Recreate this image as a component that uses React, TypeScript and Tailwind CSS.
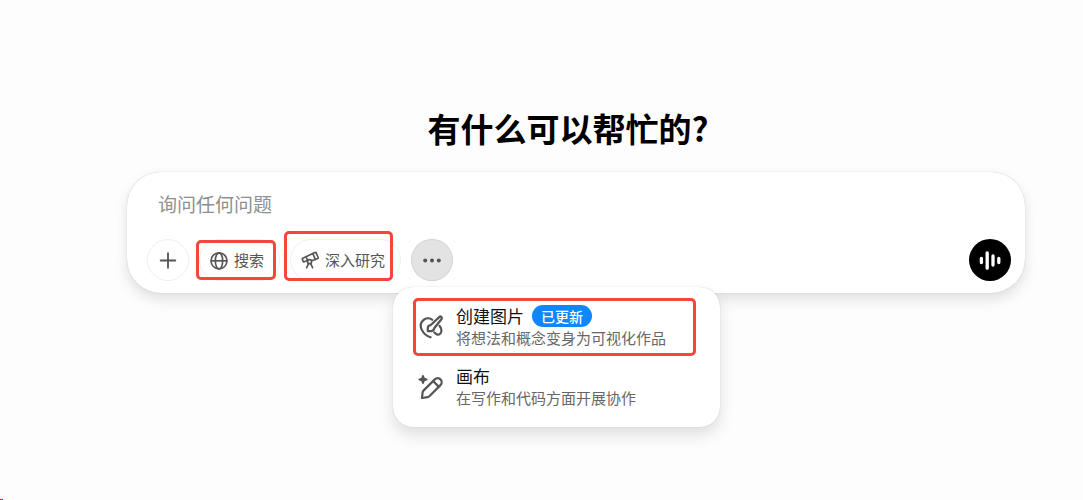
import type { ReactNode } from 'react'

type MenuEntry = {
  id: string
  title: string
  desc: string
  badge?: string
  marked?: boolean
  icon: ReactNode
}

function PlusIcon() {
  return (
    <svg width="22" height="22" viewBox="0 0 24 24" fill="none" stroke="currentColor" strokeWidth="2" strokeLinecap="round" aria-hidden="true">
      <path d="M12 4.5v16M4 12.5h16" />
    </svg>
  )
}

function GlobeIcon() {
  return (
    <svg width="20" height="20" viewBox="0 0 24 24" fill="none" stroke="currentColor" strokeWidth="2" aria-hidden="true">
      <circle cx="12" cy="13" r="9.6" />
      <ellipse cx="12" cy="13" rx="4.4" ry="9.6" />
      <path d="M2.4 13h19.2" />
    </svg>
  )
}

function TelescopeIcon() {
  return (
    <svg width="20" height="20" viewBox="0 0 24 24" fill="none" stroke="currentColor" strokeWidth="2" strokeLinecap="round" strokeLinejoin="round" aria-hidden="true">
      <path d="M15.4 4.2l2.7-1.2a1 1 0 0 1 1.3.5l2.4 5.5a1 1 0 0 1-.5 1.3l-2.9 1.2z" />
      <path d="M15.4 4.3L7.2 8l1.9 4.6" />
      <path d="M18.2 11.4l-4.3 1.5" />
      <path d="M7.2 8l-3.9 1.9a1 1 0 0 0-.5 1.3l1 2.4a1 1 0 0 0 1.3.5l4-1.5" />
      <circle cx="11.5" cy="14" r="2.4" />
      <path d="M10.2 16.3L8 21.3M12.9 16.3l2.2 5" />
    </svg>
  )
}

function DotsIcon() {
  return (
    <svg width="24" height="24" viewBox="0 0 24 24" fill="currentColor" aria-hidden="true">
      <circle cx="5.2" cy="12.5" r="2" />
      <circle cx="12" cy="12.5" r="2" />
      <circle cx="18.8" cy="12.5" r="2" />
    </svg>
  )
}

function VoiceIcon() {
  return (
    <svg width="24" height="24" viewBox="0 0 24 24" fill="none" stroke="currentColor" strokeWidth="3.3" strokeLinecap="round" aria-hidden="true">
      <path d="M3.4 10.5v4M9.2 4.8v15.4M15 8v9M20.8 10.5v4" />
    </svg>
  )
}

function PaletteBrushIcon() {
  return (
    <svg width="26" height="26" viewBox="0 0 26 26" fill="none" stroke="currentColor" strokeWidth="2.2" strokeLinecap="round" strokeLinejoin="round" aria-hidden="true">
      <path d="M14.2 5.8C12.2 4 8.800 3.600 6.300 5.400 3 7.800 1.800 11.600 3.700 15.600c1.700 3.500 4.900 6.500 8.900 7.700" />
      <path d="M21.500 11.800c1.300 1.600 2.100 3.400 1.900 5.200-.2 2.200-1.900 3.900-3.900 3.700-1.500-.2-2.200-1.200-3.200-2.300" />
      <path d="M12.500 11.200L21.200 3.100a1.500 1.500 0 0 1 2.200 2.100l-7.200 9.100c-.3 1.800-1.500 2.900-3.300 2.900H9.800v-3c0-1.700 1-2.800 2.700-3z" />
    </svg>
  )
}

function SparklePencilIcon() {
  return (
    <svg width="26" height="26" viewBox="0 0 26 26" fill="none" stroke="currentColor" strokeWidth="2.2" strokeLinecap="round" strokeLinejoin="round" aria-hidden="true">
      <path d="M5 1.600l1.200 2.700 2.700 1.200-2.700 1.200L5 9.400 3.800 6.700 1.100 5.500l2.700-1.200z" fill="currentColor" strokeWidth="1.400" />
      <path d="M4 24l.6-5.600a3 3 0 0 1 .9-1.800L16.800 5.400a4 4 0 0 1 5.700 5.700L11.300 22.300a3 3 0 0 1-1.800.9z" />
      <path d="M15.300 7.200l5.400 5.400" />
    </svg>
  )
}

const MENU: MenuEntry[] = [
  {
    id: 'image',
    title: '创建图片',
    desc: '将想法和概念变身为可视化作品',
    badge: '已更新',
    marked: true,
    icon: <PaletteBrushIcon />,
  },
  {
    id: 'canvas',
    title: '画布',
    desc: '在写作和代码方面开展协作',
    icon: <SparklePencilIcon />,
  },
]

function ToolMenu() {
  return (
    <div
      role="menu"
      className="absolute top-12 -left-[18px] z-10 w-[327px] rounded-[20px] bg-white py-2.5 shadow-[0_0_1px_rgba(0,0,0,0.25),0_8px_16px_rgba(0,0,0,0.12)]"
    >
      {MENU.map((m) => (
        <button
          key={m.id}
          type="button"
          role="menuitem"
          className="relative flex w-full items-center gap-3 pt-2 pb-[9px] pr-6 pl-[25px] text-left"
        >
          <span className="shrink-0 text-[#555]">{m.icon}</span>
          <span className="min-w-0 flex-1 whitespace-nowrap">
            <span className="flex h-[22px] items-center gap-2 text-[17px] leading-[22px] text-[#111]">
              {m.title}
              {m.badge && (
                <span className="rounded-full bg-[#1086fa] px-[9px] text-[14px] leading-[22px] font-medium text-white">
                  {m.badge}
                </span>
              )}
            </span>
            <span className="block text-[15px] leading-[21px] text-[#666]">{m.desc}</span>
          </span>
          {m.marked && (
            <span className="pointer-events-none absolute top-px right-6 bottom-px left-5 rounded-[5px] border-3 border-[#f4463a]" />
          )}
        </button>
      ))}
    </div>
  )
}

export default function App() {
  return (
    <main className="relative min-h-screen bg-[#fdfdfd] pt-[106px] pr-[58px] pl-[127px] font-['Noto_Sans_CJK_SC',sans-serif]">
      <h1 className="pr-4 text-center text-[33px] leading-[44px] font-bold text-black">有什么可以帮忙的?</h1>

      <form className="mt-[22px] rounded-[34px] bg-white pt-[18px] pr-3.5 pb-3 pl-5 shadow-[0_0_1px_rgba(0,0,0,0.25),0_6px_14px_rgba(0,0,0,0.12)]">
        <input
          type="text"
          aria-label="询问任何问题"
          placeholder="询问任何问题"
          className="block h-7 w-full bg-transparent pl-[11px] text-[19px] text-[#333] outline-none placeholder:text-[#8f8f8f]"
        />
        <div className="mt-[21px] flex items-center gap-2.5 text-[#555]">
          <button
            type="button"
            aria-label="添加"
            className="flex size-[42px] items-center justify-center rounded-full ring-1 ring-[#f0f0f0] ring-inset"
          >
            <PlusIcon />
          </button>
          <button
            type="button"
            className="relative flex h-[42px] items-center gap-[5px] rounded-full pr-4 pl-2.5 text-[15px] whitespace-nowrap ring-1 ring-[#f0f0f0] ring-inset"
          >
            <GlobeIcon />
            搜索
            <span className="pointer-events-none absolute inset-y-px right-1 -left-[3px] rounded-[5px] border-3 border-[#f4463a]" />
          </button>
          <button
            type="button"
            className="relative flex h-[42px] items-center gap-[5px] rounded-full pr-4 pl-2.5 text-[15px] whitespace-nowrap ring-1 ring-[#f0f0f0] ring-inset"
          >
            <TelescopeIcon />
            深入研究
            <span className="pointer-events-none absolute -top-2 right-2 bottom-0 -left-[6px] rounded-[5px] border-3 border-[#f4463a]" />
          </button>
          <div className="relative">
            <button
              type="button"
              aria-label="更多"
              aria-haspopup="menu"
              aria-expanded="true"
              className="flex size-[42px] items-center justify-center rounded-full bg-[#e3e3e3] ring-1 ring-[#d6d6d6] ring-inset"
            >
              <DotsIcon />
            </button>
            <ToolMenu />
          </div>
          <button
            type="button"
            aria-label="语音"
            className="ml-auto flex size-[42px] items-center justify-center rounded-full bg-black text-white"
          >
            <VoiceIcon />
          </button>
        </div>
      </form>

      <div className="absolute bottom-0 left-0 flex h-px" aria-hidden="true">
        <span className="w-px bg-red-600" />
        <span className="w-px bg-green-600" />
        <span className="w-px bg-blue-700" />
      </div>
    </main>
  )
}
